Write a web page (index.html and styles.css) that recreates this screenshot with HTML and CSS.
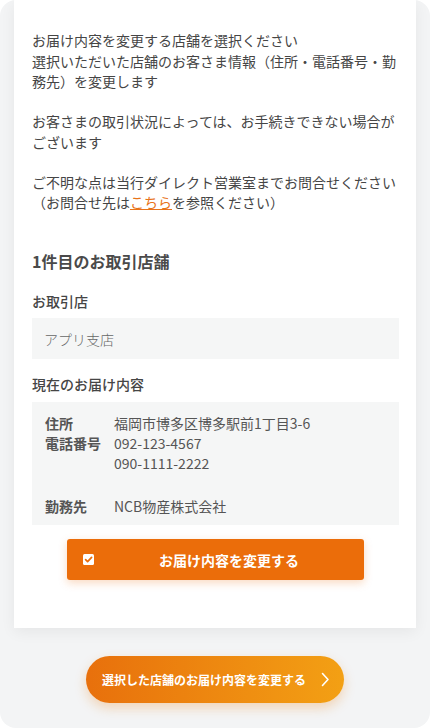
FILE: index.html
```html
<html>
  <head>
    <title>お届け内容の変更</title>
    <link rel="stylesheet" href="styles.css">
  </head>
  <body>
  <div class="screen">
    <div class="card">
      <p class="lead">お届け内容を変更する店舗を選択ください<br>選択いただいた店舗のお客さま情報（住所・電話番号・勤務先）を変更します</p>
      <p class="lead">お客さまの取引状況によっては、お手続きできない場合がございます</p>
      <p class="lead">ご不明な点は当行ダイレクト営業室までお問合せください（お問合せ先は<a href="#" class="link">こちら</a>を参照ください）</p>

      <h2 class="shop-title">1件目のお取引店舗</h2>

      <div class="label">お取引店</div>
      <div class="field">アプリ支店</div>

      <div class="label label-second">現在のお届け内容</div>
      <div class="info">
        <div class="row">
          <span class="key">住所</span>
          <span class="val">福岡市博多区博多駅前1丁目3-6</span>
        </div>
        <div class="row">
          <span class="key">電話番号</span>
          <span class="val">092-123-4567<br>090-1111-2222</span>
        </div>
        <div class="row row-work">
          <span class="key">勤務先</span>
          <span class="val">NCB物産株式会社</span>
        </div>
      </div>

      <button class="change-btn">
        <span class="check">
          <svg width="11" height="11" viewBox="0 0 11 11"><rect x="0" y="0" width="11" height="11" rx="1.5" fill="#fff"/><path d="M2.6 5.6 L4.6 7.6 L8.6 3.4" fill="none" stroke="#eb6d0a" stroke-width="1.7" stroke-linecap="round" stroke-linejoin="round"/></svg>
        </span>
        <span class="change-text">お届け内容を変更する</span>
      </button>
    </div>

    <div class="footer">
      <button class="submit-btn">
        <span>選択した店舗のお届け内容を変更する</span>
        <svg width="9" height="15" viewBox="0 0 9 15"><path d="M1.5 1.5 L7 7.5 L1.5 13.5" fill="none" stroke="#fff" stroke-width="1.6" stroke-linecap="round" stroke-linejoin="round"/></svg>
      </button>
    </div>
  </div>
  </body>
</html>
```

FILE: styles.css
```css
body {
  margin: 0;
  background: #fff;
  font-family: "Noto Sans CJK JP", "Noto Sans", sans-serif;
  color: #454545;
}
.screen {
  height: 728px;
  background: #f3f4f5;
  border-radius: 16px;
  overflow: hidden;
}
.card {
  margin: 0 14px;
  padding: 30px 17px 48px 18px;
  background: #fff;
  box-shadow: 0 4px 14px rgb(0 0 0 / 6%);
}
.lead {
  margin: 0 0 19.5px;
  font-size: 14px;
  line-height: 20.5px;
}
.link {
  color: #e8731a;
  text-decoration: underline;
}
.shop-title {
  margin: 36.5px 0 0;
  font-size: 16px;
  line-height: 24px;
  font-weight: bold;
  color: #4a4a4a;
}
.label {
  margin-top: 18px;
  font-size: 14px;
  line-height: 20px;
  font-weight: 500;
}
.label-second {
  margin-top: 15px;
}
.field {
  margin-top: 7px;
  padding: 10.5px 12px;
  background: #f5f6f6;
  font-size: 14px;
  line-height: 20px;
  color: #666;
  font-weight: 300;
}
.info {
  margin-top: 8px;
  padding: 11px 13px 9px;
  background: #f5f6f6;
  font-size: 14px;
  line-height: 20px;
}
.row {
  display: flex;
}
.row-work {
  margin-top: 23px;
}
.key {
  width: 69px;
  flex-shrink: 0;
  font-weight: bold;
  color: #555;
}
.val {
  color: #555;
}
.change-btn {
  display: flex;
  align-items: center;
  width: 297px;
  height: 41px;
  margin: 14px auto 0;
  padding: 0 0 0 16px;
  border: none;
  border-radius: 3px;
  background: #eb6d0a;
  box-shadow: 0 3px 8px rgb(235 109 10 / 25%);
  font-family: inherit;
  color: #fff;
}
.check {
  display: flex;
  width: 11px;
  height: 11px;
}
.change-text {
  flex: 1;
  text-align: center;
  font-size: 14px;
  font-weight: bold;
}
.footer {
  display: flex;
  justify-content: center;
  padding-top: 28px;
}
.submit-btn {
  display: flex;
  align-items: center;
  gap: 15px;
  width: 258px;
  height: 47px;
  padding: 0 0 0 16px;
  border: none;
  border-radius: 24px;
  background: linear-gradient(90deg, #e8700c, #f3a014);
  box-shadow: 0 5px 12px rgb(236 130 20 / 28%);
  font-family: inherit;
  font-size: 12px;
  font-weight: bold;
  color: #fff;
}
```
